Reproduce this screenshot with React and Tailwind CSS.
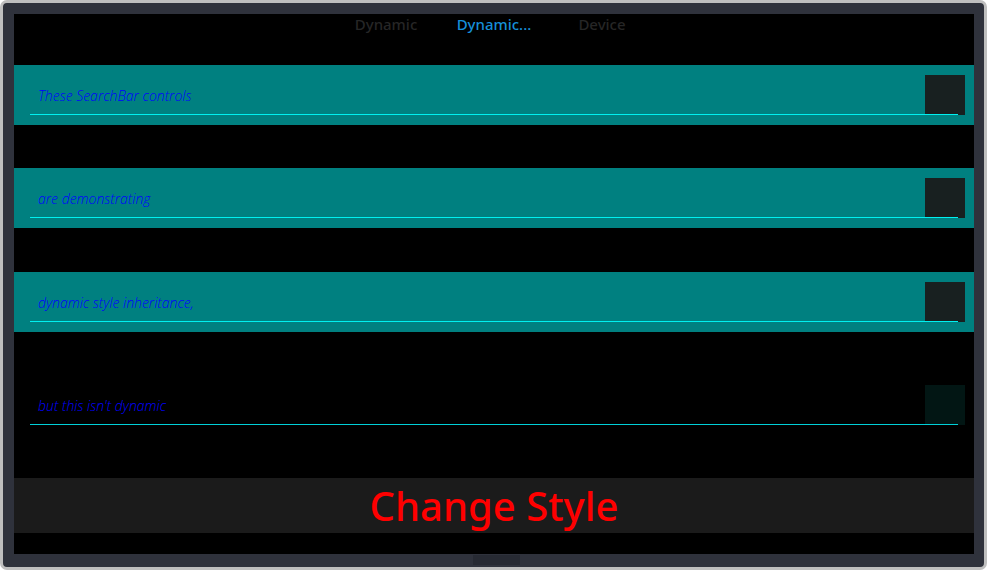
import React from 'react';

const rows = [
  { text: 'These SearchBar controls', band: true, gap: 'mt-0' },
  { text: 'are demonstrating', band: true, gap: 'mt-[43px]' },
  { text: 'dynamic style inheritance,', band: true, gap: 'mt-[44px]' },
  { text: "but this isn't dynamic", band: false, gap: 'mt-[43px]' },
];

function SearchRow({ text, band, gap }) {
  return (
    <div className={`relative h-[60px] shrink-0 ${gap} ${band ? 'bg-[#008080]' : 'bg-black'}`}>
      <div className={`absolute left-[16px] right-[16px] bottom-[10px] h-[1px] ${band ? 'bg-[#00f0f0]' : 'bg-[#00d0d8]'}`} />
      <div className="flex h-full items-center pl-[24px] pr-[9px]">
        <span
          className="flex-1 italic font-light text-[14px] text-[#0000ff]"
          style={{ fontFamily: "'Open Sans', 'Noto Sans', sans-serif" }}
        >
          {text}
        </span>
        <div className={`w-[40px] h-[40px] ${band ? 'bg-[#182020]' : 'bg-[#021614]'}`} />
      </div>
    </div>
  );
}

export default function App() {
  const tabs = [
    { label: 'Dynamic', active: false },
    { label: 'Dynamic...', active: true },
    { label: 'Device', active: false },
  ];

  return (
    <div className="w-[987px] h-[572px] bg-white overflow-hidden">
      <div className="w-[987px] h-[570px] rounded-[7px] border-[3px] border-[#bfbfbf] bg-[#2f323c] pt-[11px] pl-[11px] pr-[10px] pb-[13px] flex flex-col">
        <div className="flex-1 bg-black flex flex-col" style={{ fontFamily: "'Noto Sans', sans-serif" }}>
          {/* tabs */}
          <div className="h-[51px] flex justify-center">
            {tabs.map((t) => (
              <div
                key={t.label}
                className={`text-[15px] font-medium leading-[20px] h-[20px] w-[108px] text-center ${
                  t.active ? 'text-[#168fd8]' : 'text-[#262626]'
                }`}
              >
                {t.label}
              </div>
            ))}
          </div>

          <div className="flex flex-col">
            {rows.map((r) => (
              <SearchRow key={r.text} {...r} />
            ))}
          </div>

          <div className="mt-[43px] h-[55px] bg-[#1b1b1b] flex items-center justify-center">
            <span className="text-[40px] font-medium leading-none text-[#ff0000] pt-[1px]">Change Style</span>
          </div>
          <div className="flex-1" />
        </div>
        <div className="h-0 relative">
          <div className="absolute left-[459px] top-[1px] w-[47px] h-[10px] bg-[#272a33]" />
        </div>
      </div>
    </div>
  );
}
